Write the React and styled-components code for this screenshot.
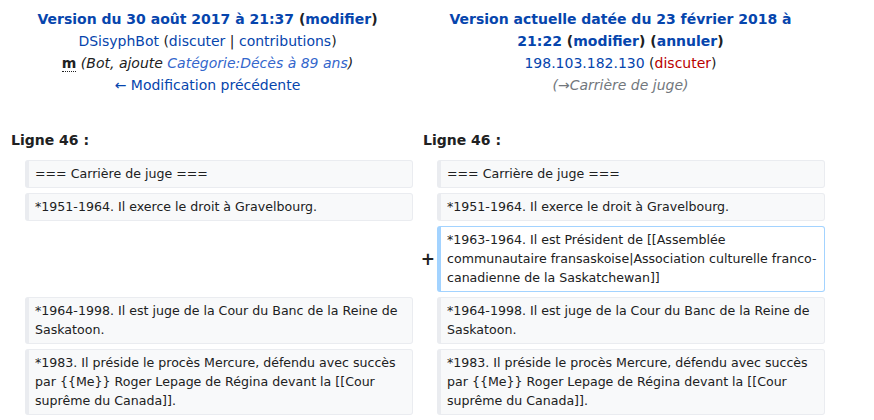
import React from "react";
import styled, { createGlobalStyle } from "styled-components";

const Global = createGlobalStyle`
  html, body { margin: 0; padding: 0; background: #fff; }
  body { font-family: "DejaVu Sans", sans-serif; color: #202122; }
`;

const Table = styled.div`
  display: grid;
  grid-template-columns: 14px 388px 24px 388px;
  padding: 8px 0 0 11px;
  align-items: center;
  row-gap: 5px;
`;

const Header = styled.div`
  grid-column: ${(p) => (p.$side === "left" ? "1 / 3" : "3 / 5")};
  align-self: start;
  text-align: center;
  font-size: 14px;
  line-height: 22px;
  padding-left: ${(p) => p.$pl || 0}px;
  padding-right: ${(p) => p.$pr || 0}px;
`;

const Line = styled.div`
  display: block;
`;

const Title = styled.strong`
  font-weight: bold;
  color: #202122;
`;

const Link = styled.a`
  color: ${(p) => (p.$red ? "#ba0000" : p.$light ? "#3366cc" : "#0645ad")};
  text-decoration: none;
  cursor: pointer;
`;

const Comment = styled.span`
  font-style: italic;
  color: ${(p) => (p.$gray ? "#72777d" : "#202122")};
`;

const Minor = styled.abbr`
  font-weight: bold;
  text-decoration: none;
  border-bottom: 1px dotted #202122;
  cursor: help;
`;

const LineNo = styled.div`
  grid-column: ${(p) => (p.$side === "left" ? "1 / 3" : "3 / 5")};
  font-weight: bold;
  font-size: 14px;
  line-height: 22px;
  padding-left: ${(p) => p.$pl || 0}px;
  margin-top: ${(p) => p.$mt || 0}px;
  margin-bottom: 4px;
`;

const Marker = styled.div`
  grid-column: ${(p) => p.$col};
  text-align: right;
  font-weight: bold;
  font-size: 17px;
  line-height: 20px;
  padding-right: 2px;
`;

const Cell = styled.div`
  grid-column: ${(p) => p.$col};
  align-self: stretch;
  box-sizing: border-box;
  font-size: 12.6px;
  line-height: 19px;
  padding: 3px 6px 4px 6px;
  border: 1px solid ${(p) => (p.$added ? "#a3d3ff" : "#eaecf0")};
  border-left-width: 4px;
  border-radius: 3px;
  background: ${(p) => (p.$added ? "#ffffff" : "#f8f9fa")};
  word-wrap: break-word;
`;

const rows = [
  { text: "=== Carrière de juge ===", both: true },
  { text: "*1951-1964. Il exerce le droit à Gravelbourg.", both: true },
  {
    text:
      "*1963-1964. Il est Président de [[Assemblée communautaire fransaskoise|Association culturelle franco-canadienne de la Saskatchewan]]",
    added: true,
  },
  { text: "*1964-1998. Il est juge de la Cour du Banc de la Reine de Saskatoon.", both: true },
  {
    text:
      "*1983. Il préside le procès Mercure, défendu avec succès par {{Me}} Roger Lepage de Régina devant la [[Cour suprême du Canada]].",
    both: true,
  },
];

export default function App() {
  return (
    <>
      <Global />
      <Table>
        <Header $side="left" $pr={9}>
          <Line>
            <Title>
              <Link>Version du 30 août 2017 à 21:37</Link> (<Link>modifier</Link>)
            </Title>
          </Line>
          <Line>
            <Link>DSisyphBot</Link> (<Link>discuter</Link> | <Link>contributions</Link>)
          </Line>
          <Line>
            <Minor title="Modification mineure">m</Minor>{" "}
            <Comment>
              (Bot, ajoute <Link $light>Catégorie:Décès à 89 ans</Link>)
            </Comment>
          </Line>
          <Line>
            <Link>← Modification précédente</Link>
          </Line>
        </Header>
        <Header $side="right" $pl={14} $pr={11}>
          <Line>
            <Title>
              <Link>Version actuelle datée du 23 février 2018 à 21:22</Link> (
              <Link>modifier</Link>) (<Link>annuler</Link>)
            </Title>
          </Line>
          <Line>
            <Link>198.103.182.130</Link> (<Link $red>discuter</Link>)
          </Line>
          <Line>
            <Comment $gray>(→Carrière de juge)</Comment>
          </Line>
        </Header>

        <LineNo $side="left" $mt={28}>
          Ligne 46 :
        </LineNo>
        <LineNo $side="right" $mt={28} $pl={10}>
          Ligne 46 :
        </LineNo>

        {rows.map((r, i) => (
          <React.Fragment key={i}>
            {r.both && (
              <>
                <Marker $col="1" />
                <Cell $col="2">{r.text}</Cell>
                <Marker $col="3" />
                <Cell $col="4">{r.text}</Cell>
              </>
            )}
            {r.added && (
              <>
                <Marker $col="3">+</Marker>
                <Cell $col="4" $added>
                  {r.text}
                </Cell>
              </>
            )}
          </React.Fragment>
        ))}
      </Table>
    </>
  );
}
